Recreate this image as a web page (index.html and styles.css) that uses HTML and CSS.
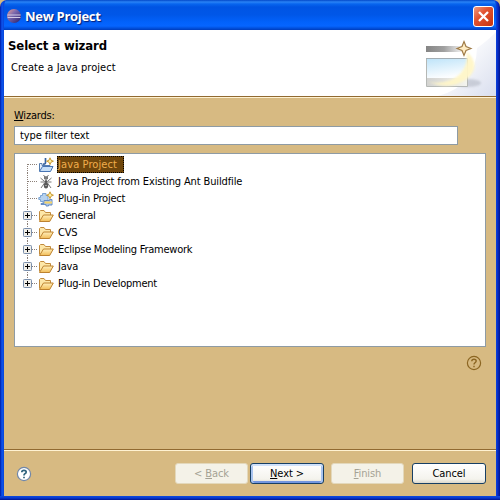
FILE: index.html
```
<!DOCTYPE html>
<html lang="en">
<head>
<meta charset="utf-8">
<title>New Project</title>
<link rel="stylesheet" href="styles.css">
</head>
<body>
<svg class="defs" width="0" height="0">
  <defs>
    <linearGradient id="gold" x1="0" y1="0" x2="0" y2="1"><stop offset="0" stop-color="#fff0bd"/><stop offset="1" stop-color="#f2bd57"/></linearGradient>
    <linearGradient id="orb" x1="0" y1="0" x2="1" y2="1"><stop offset="0" stop-color="#f3a491"/><stop offset=".4" stop-color="#7a68ae"/><stop offset="1" stop-color="#251b66"/></linearGradient>
    <linearGradient id="bar" x1="0" y1="0" x2="1" y2="0"><stop offset="0" stop-color="#858585"/><stop offset=".5" stop-color="#a0a0a0"/><stop offset="1" stop-color="#f2f2f2"/></linearGradient>
    <linearGradient id="sky" x1="0" y1="0" x2=".3" y2="1"><stop offset="0" stop-color="#bfe4f9"/><stop offset="1" stop-color="#fbfdff"/></linearGradient>
    <linearGradient id="swoosh" x1="0" y1="0" x2="1" y2="1"><stop offset=".3" stop-color="#fff"/><stop offset="1" stop-color="#d9deee"/></linearGradient>
    <linearGradient id="base" x1="0" y1="0" x2="1" y2="0"><stop offset="0" stop-color="#d2d2d0"/><stop offset="1" stop-color="#f4f4ee"/></linearGradient>
    <filter id="soft" x="-30%" y="-30%" width="160%" height="160%"><feGaussianBlur stdDeviation="1"/></filter>
    <symbol id="folder" viewBox="0 0 16 16">
      <path d="M1.500 12.500V3.500L2.500 2.500H6L7.500 4.500H12.500V7" fill="#fde7a8" stroke="#c18a3c"/>
      <path d="M1.500 13.500L5.500 7H15.300L11.700 13.500Z" fill="url(#gold)" stroke="#bd822f"/>
    </symbol>
    <symbol id="plus" viewBox="0 0 9 9">
      <rect x=".5" y=".5" width="8" height="8" rx=".8" fill="#f1efe9" stroke="#7b8fac"/>
      <path d="M2 4.500H7M4.500 2V7" stroke="#000"/>
    </symbol>
  </defs>
</svg>
<div class="window">
  <header class="titlebar">
    <svg class="app-icon" width="16" height="16" viewBox="0 0 16 16"><circle cx="8" cy="8" r="7" fill="url(#orb)"/><path d="M1.300 7H14.700M1.600 9.500H14.400" stroke="#d2cbe6" stroke-width="1"/></svg>
    <span class="title">New Project</span>
    <button class="close"><svg width="19" height="19" viewBox="0 0 19 19"><path d="M5 5L14 14M14 5L5 14" stroke="#fff" stroke-width="2.300"/></svg></button>
  </header>
  <section class="banner">
    <div class="banner-text">
      <h1>Select a wizard</h1>
      <p>Create a Java project</p>
    </div>
    <svg class="banner-art" width="76" height="66" viewBox="0 0 76 66">
      <path d="M76 2V66H18Q56 56 57 18Q66 12 76 2Z" fill="url(#swoosh)"/>
      <ellipse cx="48" cy="53" rx="13" ry="4" fill="#a9aebb" opacity=".5" filter="url(#soft)"/>
      <rect x="6" y="16" width="41" height="40" fill="#fff"/>
      <rect x="6" y="16" width="36" height="6" fill="url(#bar)"/>
      <path d="M6.500 28V56.500H47.500V28" fill="none" stroke="#b5b8b5"/>
      <rect x="7" y="29" width="40" height="19" fill="url(#sky)"/>
      <path d="M6 28.500H47" stroke="#a3adb3"/>
      <rect x="7" y="48" width="40" height="8" fill="url(#base)"/>
      <path d="M8 52Q29 55 40 44Q49 34 46 21Q62 35 48 48Q32 61 8 52Z" fill="#fff6c8" opacity=".95" filter="url(#soft)"/>
      <path d="M44 11.500L46 16.500L51 18.500L46 20.500L44 25.500L42 20.500L37 18.500L42 16.500Z" fill="#ffedc4" stroke="#a07c48" stroke-width="1.200"/>
    </svg>
  </section>
  <main class="page">
    <label class="wizards" for="filter"><u>W</u>izards:</label>
    <div class="filter" id="filter">type filter text</div>
    <ul class="tree">
      <li class="leaf first"><i class="guide"></i>
        <svg class="icon" width="16" height="16" viewBox="0 0 16 16"><path d="M1.500 14V6.500H4V8.500H12V13" fill="#e7effb" stroke="#557dae"/><path d="M1.500 14.500L4.500 9.500H15L12.500 14.500Z" fill="#c6dff8" stroke="#4774b4"/><path d="M7.500 1V5.500Q7.500 7.500 5 7" fill="none" stroke="#36629f" stroke-width="1.700"/><path d="M12 .8L13 3.200L15.400 4.200L13 5.200L12 7.600L11 5.200L8.600 4.200L11 3.200Z" fill="#fff0a5" stroke="#c49328" stroke-width=".9"/></svg>
        <span class="name selected">Java Project</span></li>
      <li class="leaf"><i class="guide"></i>
        <svg class="icon" width="16" height="16" viewBox="0 0 16 16"><path d="M5.500 1L7 3M10.500 1L9 3M2.500 4L6 7M13.500 4L10 7M2.500 8H13.500M3 14L6.500 9M13 14L9.500 9" fill="none" stroke="#777"/><ellipse cx="8" cy="4" rx="2" ry="1.700" fill="#5a5a5a"/><ellipse cx="8" cy="7.500" rx="1.500" ry="1.500" fill="#5a5a5a"/><ellipse cx="8" cy="11.500" rx="2.200" ry="3" fill="#5a5a5a"/><path d="M7.300 11.500H8.700M7.300 4H8.700" stroke="#bbb"/></svg>
        <span class="name ant">Java Project from Existing Ant Buildfile</span></li>
      <li class="leaf"><i class="guide"></i>
        <svg class="icon" width="16" height="16" viewBox="0 0 16 16"><path d="M2.500 4.500H4.500V2.500H8V4.500H10V11.500H7.500V12.500H5V10.500H2.500V8.500H.8V6.500H2.500Z" fill="#b6d2ef" stroke="#7ba3d2"/><path d="M3 12.500H6V9.500H11.500V8.500H14V14H10.500V15H8V13.500H3Z" fill="#a9c4ea" stroke="#668dc5"/><path d="M6.500 11.500H14" stroke="#f5d467" stroke-width="1.800"/><path d="M12 .8L13 3.200L15.400 4.200L13 5.200L12 7.600L11 5.200L8.600 4.200L11 3.200Z" fill="#fff0a5" stroke="#c49328" stroke-width=".9"/></svg>
        <span class="name tight">Plug-in Project</span></li>
      <li><i class="guide"></i><svg class="expander" width="9" height="9"><use href="#plus"/></svg><svg class="icon" width="16" height="16"><use href="#folder"/></svg><span class="name">General</span></li>
      <li><i class="guide"></i><svg class="expander" width="9" height="9"><use href="#plus"/></svg><svg class="icon" width="16" height="16"><use href="#folder"/></svg><span class="name">CVS</span></li>
      <li><i class="guide"></i><svg class="expander" width="9" height="9"><use href="#plus"/></svg><svg class="icon" width="16" height="16"><use href="#folder"/></svg><span class="name tight">Eclipse Modeling Framework</span></li>
      <li><i class="guide"></i><svg class="expander" width="9" height="9"><use href="#plus"/></svg><svg class="icon" width="16" height="16"><use href="#folder"/></svg><span class="name">Java</span></li>
      <li class="last"><i class="guide"></i><svg class="expander" width="9" height="9"><use href="#plus"/></svg><svg class="icon" width="16" height="16"><use href="#folder"/></svg><span class="name tight">Plug-in Development</span></li>
    </ul>
    <svg class="hint" width="16" height="16" viewBox="0 0 16 16"><circle cx="8" cy="8" r="6.600" fill="none" stroke="#8c6622" stroke-width="1.200"/><path d="M5.800 6.200Q5.800 4.300 8 4.300T10.200 6.100Q10.200 7.200 8.900 7.800Q8 8.300 8 9.500M8 10.800V12.200" fill="none" stroke="#8c6622" stroke-width="1.400"/></svg>
  </main>
  <footer class="actions">
    <svg class="help" width="16" height="16" viewBox="0 0 16 16"><circle cx="8" cy="8" r="6.600" fill="#fff" stroke="#7288a8" stroke-width="1.200"/><path d="M5.800 6.200Q5.800 4.300 8 4.300T10.200 6.100Q10.200 7.200 8.900 7.800Q8 8.300 8 9.500M8 10.800V12.200" fill="none" stroke="#2f647e" stroke-width="1.700"/></svg>
    <button class="btn back" disabled><span>&lt; <u>B</u>ack</span></button>
    <button class="btn next"><span><u>N</u>ext &gt;</span></button>
    <button class="btn finish" disabled><span><u>F</u>inish</span></button>
    <button class="btn cancel"><span>Cancel</span></button>
  </footer>
</div>
</body>
</html>
```
FILE: styles.css
```
* { box-sizing: border-box; }
body {
  margin: 0;
  background: #d6ba82;
  font: 11px/17px "DejaVu Sans Condensed", "DejaVu Sans", sans-serif;
  font-stretch: condensed;
  letter-spacing: -0.2px;
  color: #000;
}
.defs { position: absolute; }
svg { display: block; flex: none; }
.window {
  width: 500px;
  height: 500px;
  display: flex;
  flex-direction: column;
  border: solid transparent;
  border-width: 0 4px 4px;
  border-radius: 7px 7px 0 0;
  background:
    linear-gradient(transparent 496px, #0d4be0 496px, #0838cf 498px, #00138c 500px) border-box,
    linear-gradient(90deg, #0019a5 0, #0d55ee 2px, #0845d8 4px, #0845d8 496px, #0934d5 497px, #00138c 500px) border-box;
  overflow: hidden;
}
.titlebar {
  flex: none;
  height: 30px;
  margin: 0 -4px;
  padding: 2px 6px 0 6px;
  display: flex;
  align-items: center;
  background: linear-gradient(#0348c8 0, #2a83f5 2px, #0865ee 4px, #0054e3 7px, #0057e8 15px, #0262fb 22px, #0665ff 26px, #0048cf 29px, #003bbb 30px);
}
.title {
  flex: 1;
  margin-left: 3px;
  font: bold 13px/20px "Open Sans", sans-serif;
  letter-spacing: -0.3px;
  color: #fff;
  text-shadow: 1px 1px 1px #061c72;
}
.close {
  width: 21px;
  height: 21px;
  padding: 0;
  border: 1px solid #fff;
  border-radius: 3px;
  background: linear-gradient(135deg, #ef9a80, #e25331 40%, #c8330e);
}
.banner {
  flex: none;
  height: 68px;
  display: flex;
  justify-content: space-between;
  background: #fff;
  border-bottom: 1px solid #fff2d2;
  box-shadow: inset 0 -1px #916a31;
}
.banner-text { padding: 7px 0 0 4px; }
h1 {
  margin: 0;
  font: bold 13px/17px "DejaVu Sans Condensed", "DejaVu Sans", sans-serif;
  font-stretch: condensed;
  letter-spacing: -0.1px;
}
.banner p { margin: 5px 0 0 3px; letter-spacing: 0.05px; }
.page {
  flex: 1;
  display: flex;
  flex-direction: column;
  padding: 9px 10px 0;
  background: #d7ba82;
}
.wizards { height: 19px; }
u { text-underline-offset: 1px; text-decoration-thickness: 1px; }
.filter {
  width: 444px;
  height: 19px;
  padding-left: 5px;
  letter-spacing: -0.1px;
  background: #fff;
  border: 1px solid #8e9ba4;
}
.tree {
  height: 194px;
  margin: 8px 0 0;
  padding: 2px 0 0 8px;
  list-style: none;
  background: #fff;
  border: 1px solid #8e9ba4;
}
.tree li { height: 17px; display: flex; align-items: center; }
.guide {
  width: 9px;
  height: 17px;
  margin-right: -9px;
  background: repeating-linear-gradient(#8c8078 0 1px, transparent 1px 2px) 4px 0 / 1px 17px no-repeat;
}
.first .guide { background-position: 4px 8px; background-size: 1px 9px; }
.last .guide { background-size: 1px 8px; }
.guide::after {
  content: "";
  display: block;
  width: 10px;
  height: 1px;
  margin: 8px 0 0 5px;
  background: repeating-linear-gradient(90deg, #8c8078 0 1px, transparent 1px 2px);
}
.expander { z-index: 1; }
.icon { margin-left: 6px; }
.leaf .icon { margin-left: 15px; }
.name { margin-left: 3px; padding: 0 1px; height: 17px; white-space: nowrap; }
.tight { letter-spacing: -0.25px; }
.ant { letter-spacing: -0.13px; }
.selected { width: 67px; letter-spacing: 0.1px; background: #70470c; color: #f0ae4d; outline: 1px dotted #000; outline-offset: -1px; }
.hint { align-self: flex-end; margin: 8px 4px 0 0; }
.actions {
  flex: none;
  height: 47px;
  display: flex;
  align-items: center;
  padding: 1px 10px 0 12px;
  background: #d7ba82;
  border-top: 1px solid #916a31;
  box-shadow: inset 0 1px #fff2d2;
}
.help { margin-right: auto; }
.btn {
  width: 74px;
  height: 21px;
  padding: 0;
  border: 1px solid #173f64;
  border-radius: 3px;
  background: linear-gradient(#fff, #f4f3ed 80%, #dcd8cb);
  font: inherit;
  letter-spacing: -0.1px;
  color: #000;
}
.btn:disabled { width: 73px; color: #a5a294; background: #f4f2e8; border-color: #e3d8bb; }
.next { margin-left: 2px; box-shadow: inset 0 2px #cfe1fb, inset 2px 0 #a9c4ef, inset -2px 0 #a9c4ef, inset 0 -2px #7396de; }
.finish { margin-left: 7px; }
.cancel { margin-left: 8px; }
```
